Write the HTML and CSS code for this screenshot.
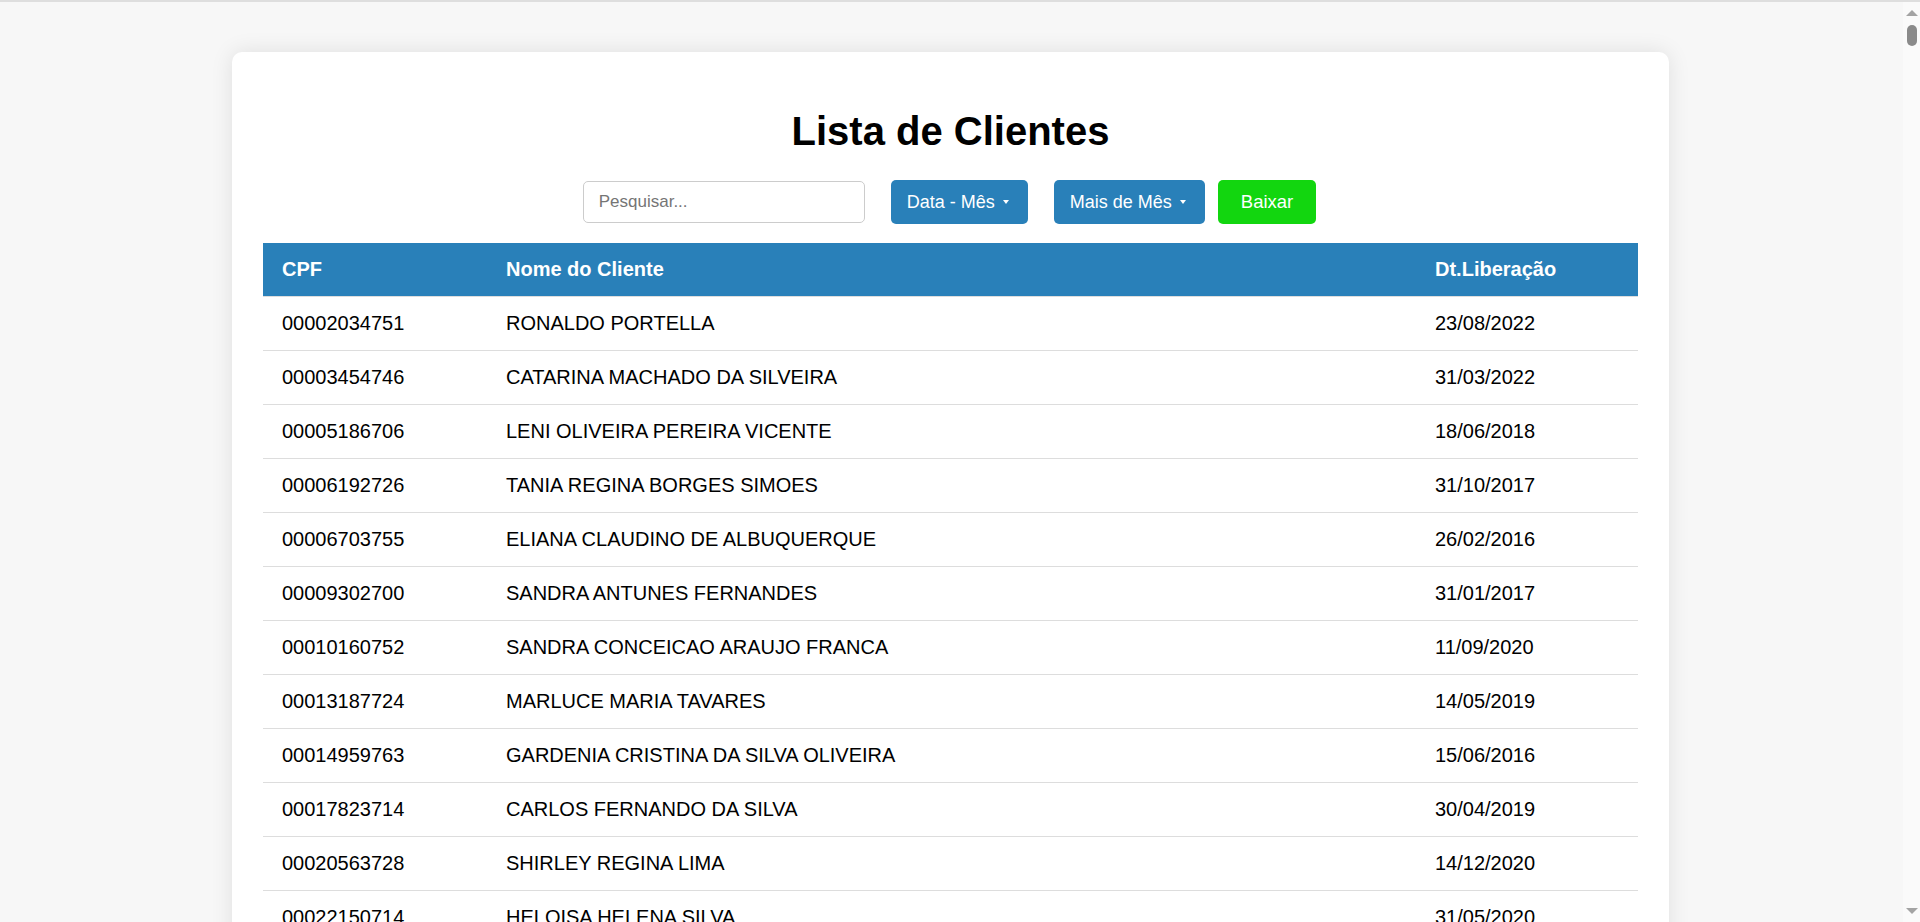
FILE: index.html
```html
<!DOCTYPE html>
<html lang="pt-BR">
<head>
<meta charset="UTF-8">
<title>Lista de Clientes</title>
<link rel="stylesheet" href="styles.css">
</head>
<body>
<div class="card">
  <h1 class="title">Lista de Clientes</h1>
  <div class="controls">
    <input class="search" type="text" placeholder="Pesquisar...">
    <button class="btn btn-blue dropdown">Data - Mês<span class="caret"></span></button>
    <button class="btn btn-blue dropdown">Mais de Mês<span class="caret"></span></button>
    <button class="btn btn-green">Baixar</button>
  </div>
  <table class="clients">
    <colgroup>
      <col class="col-cpf">
      <col class="col-name">
      <col class="col-date">
    </colgroup>
    <thead>
      <tr><th>CPF</th><th>Nome do Cliente</th><th>Dt.Liberação</th></tr>
    </thead>
    <tbody>
      <tr><td>00002034751</td><td>RONALDO PORTELLA</td><td>23/08/2022</td></tr>
      <tr><td>00003454746</td><td>CATARINA MACHADO DA SILVEIRA</td><td>31/03/2022</td></tr>
      <tr><td>00005186706</td><td>LENI OLIVEIRA PEREIRA VICENTE</td><td>18/06/2018</td></tr>
      <tr><td>00006192726</td><td>TANIA REGINA BORGES SIMOES</td><td>31/10/2017</td></tr>
      <tr><td>00006703755</td><td>ELIANA CLAUDINO DE ALBUQUERQUE</td><td>26/02/2016</td></tr>
      <tr><td>00009302700</td><td>SANDRA ANTUNES FERNANDES</td><td>31/01/2017</td></tr>
      <tr><td>00010160752</td><td>SANDRA CONCEICAO ARAUJO FRANCA</td><td>11/09/2020</td></tr>
      <tr><td>00013187724</td><td>MARLUCE MARIA TAVARES</td><td>14/05/2019</td></tr>
      <tr><td>00014959763</td><td>GARDENIA CRISTINA DA SILVA OLIVEIRA</td><td>15/06/2016</td></tr>
      <tr><td>00017823714</td><td>CARLOS FERNANDO DA SILVA</td><td>30/04/2019</td></tr>
      <tr><td>00020563728</td><td>SHIRLEY REGINA LIMA</td><td>14/12/2020</td></tr>
      <tr><td>00022150714</td><td>HELOISA HELENA SILVA</td><td>31/05/2020</td></tr>
    </tbody>
  </table>
</div>
<div class="scrollbar" aria-hidden="true">
  <span class="sb-arrow sb-up"></span>
  <span class="sb-thumb"></span>
  <span class="sb-fill"></span>
  <span class="sb-arrow sb-down"></span>
</div>
</body>
</html>
```

FILE: styles.css
```css
html {
  background: #f7f7f7;
  border-top: 2px solid #dedede;
}

body {
  margin: 0 19px 0 0;
  background: #f7f7f7;
  font-family: "Liberation Sans", Arial, sans-serif;
  color: #000;
}

.card {
  width: 1437px;
  box-sizing: border-box;
  margin: 50px auto 40px;
  padding: 31px;
  background: #fff;
  border-radius: 10px;
  box-shadow: 0 0 22px rgba(0, 0, 0, 0.1);
}

.title {
  margin: 25px 0 26px;
  font-size: 40px;
  line-height: 46px;
  font-weight: bold;
  text-align: center;
}

.controls {
  display: flex;
  justify-content: center;
  align-items: center;
  gap: 13px;
  margin-bottom: 19px;
  padding-right: 2px;
}

.search {
  width: 282px;
  height: 42px;
  box-sizing: border-box;
  padding: 0 15px;
  border: 1px solid #ccc;
  border-radius: 5px;
  font-family: "Liberation Sans", Arial, sans-serif;
  font-size: 17px;
  color: #000;
  outline: none;
}

.search::placeholder {
  color: #757575;
}

.btn {
  height: 44px;
  border: none;
  border-radius: 5px;
  color: #fff;
  font-family: "Liberation Sans", Arial, sans-serif;
  cursor: pointer;
  display: inline-flex;
  align-items: center;
}

.btn-blue {
  background: #2980b9;
  font-size: 18px;
  padding: 0 19px 0 16px;
}

.dropdown {
  margin-left: 13px;
}

.caret {
  display: inline-block;
  width: 0;
  height: 0;
  margin-left: 8px;
  border-top: 4px solid #fff;
  border-left: 3.5px solid transparent;
  border-right: 3.5px solid transparent;
}

.btn-green {
  background: #12d60f;
  font-size: 18.5px;
  padding: 0 23px;
}

.clients {
  width: 100%;
  border-collapse: collapse;
  table-layout: fixed;
}

.col-cpf {
  width: 224px;
}

.col-date {
  width: 222px;
}

.clients th,
.clients td {
  padding: 15px 19px;
  font-size: 20px;
  line-height: 23px;
  text-align: left;
  border-bottom: 1px solid #ddd;
  white-space: nowrap;
}

.clients th {
  background: #2980b9;
  color: #fff;
  font-weight: bold;
}

/* classic browser scrollbar drawn over the right edge */
.scrollbar {
  position: fixed;
  top: 2px;
  right: 0;
  bottom: 0;
  width: 17px;
  background: #fafafa;
  display: flex;
  flex-direction: column;
  align-items: center;
}

.sb-arrow {
  width: 0;
  height: 0;
  border-left: 6px solid transparent;
  border-right: 6px solid transparent;
}

.sb-up {
  margin-top: 8px;
  border-bottom: 6px solid #a3a3a3;
}

.sb-down {
  margin-bottom: 8px;
  border-top: 6px solid #a3a3a3;
}

.sb-thumb {
  margin-top: 9px;
  width: 10px;
  height: 21px;
  border-radius: 5px;
  background: #8a8a8a;
}

.sb-fill {
  flex: 1;
}
```
